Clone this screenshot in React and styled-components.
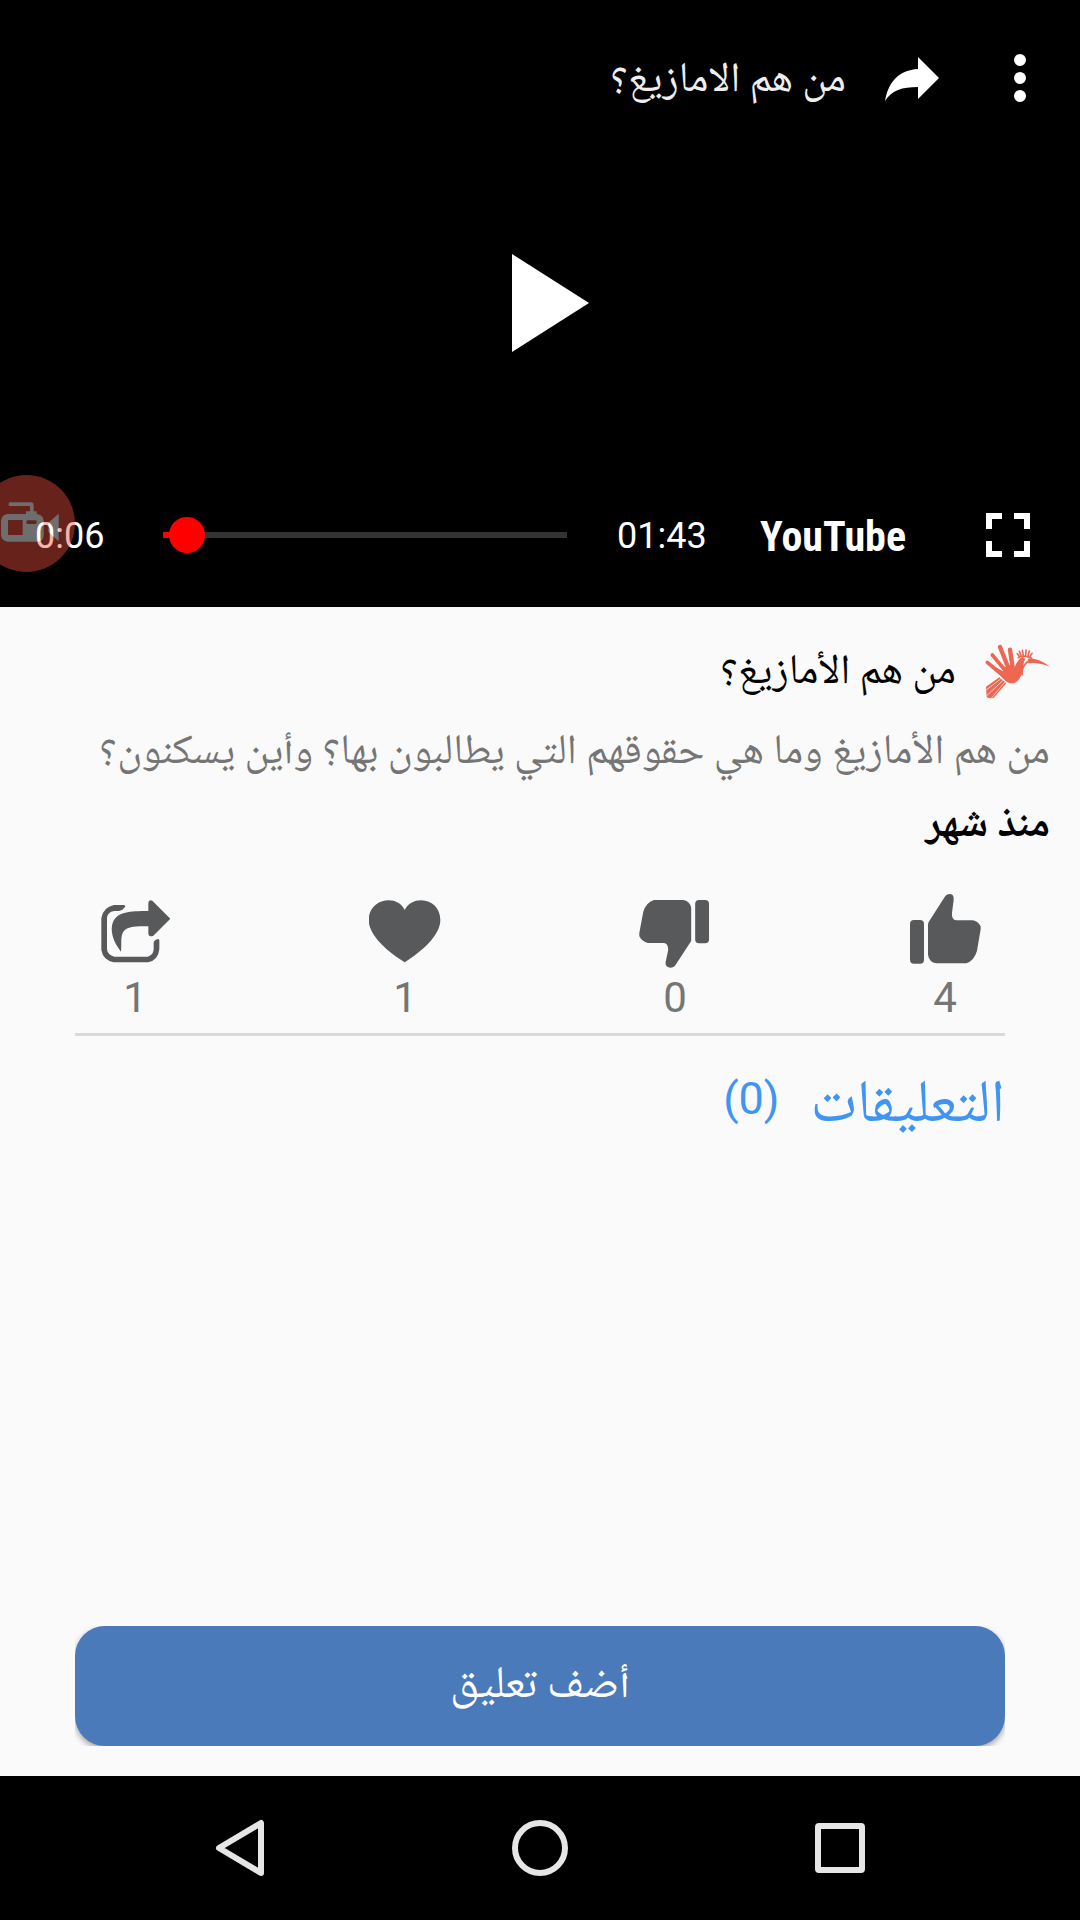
import React, { useState } from "react";
import styled, { createGlobalStyle } from "styled-components";

const arabic = '"Noto Naskh Arabic UI", "Noto Naskh Arabic", Roboto, "Noto Sans", sans-serif';
const latin = 'Roboto, "Noto Sans", sans-serif';

const GlobalStyle = createGlobalStyle`
  *, *::before, *::after { box-sizing: border-box; }
  body { margin: 0; background: #fafafa; }
  h1, h2, p, time { margin: 0; }
  svg { display: block; flex: none; }
`;

const Screen = styled.div`
  display: flex;
  flex-direction: column;
  min-height: 100vh;
  font-family: ${arabic};
  font-size: 42px;
  color: #000;
`;

const PlainButton = styled.button`
  display: flex;
  align-items: center;
  justify-content: center;
  margin: 0;
  padding: 0;
  border: 0;
  background: none;
  color: inherit;
  font: inherit;
  cursor: pointer;
`;

/* Video player */
const Player = styled.section`
  position: relative;
  display: flex;
  flex-direction: column;
  height: 607px;
  overflow: hidden;
  background: #000;
  color: #fff;
`;

const PlayerHeader = styled.header`
  display: flex;
  align-items: center;
  height: 142px;
  padding: 14px 48px 0;
`;

const PlayerTitle = styled.h2`
  margin-right: 39px;
  padding-top: 5px;
  color: #eee;
  font-size: 42px;
  font-weight: 400;
  line-height: 72px;
`;

const ShareVideo = styled(PlainButton)`
  margin-right: 69px;
`;

const PlayerCenter = styled.div`
  display: flex;
  flex: 1;
  align-items: center;
  justify-content: center;
`;

const Controls = styled.div`
  display: flex;
  align-items: center;
  height: 144px;
  padding: 0 50px 0 35px;
  direction: ltr;
`;

const TimeLabel = styled.span`
  width: ${(p) => p.$width}px;
  padding-top: 2px;
  font-family: ${latin};
  font-size: 36px;
  line-height: 42px;
`;

const Seek = styled.input`
  flex: 1;
  min-width: 0;
  height: 36px;
  margin: 0 32px 0 40px;
  appearance: none;
  background:
    linear-gradient(#f00, #f00) 18px center / calc((100% - 36px) * ${(p) => p.$ratio}) 6px no-repeat,
    linear-gradient(#333, #333) center / calc(100% - 36px) 6px no-repeat;

  &::-webkit-slider-thumb {
    appearance: none;
    width: 36px;
    height: 36px;
    border: 0;
    border-radius: 50%;
    background: #f00;
  }
`;

const Brand = styled.a`
  margin: 0 80px 0 54px;
  padding-top: 3px;
  color: #fff;
  font-family: "Roboto Condensed", "Liberation Sans Narrow", Roboto, sans-serif;
  font-size: 42px;
  font-weight: 700;
  line-height: 48px;
  text-decoration: none;
`;

const RecorderBubble = styled.div`
  position: absolute;
  top: 475px;
  left: -22px;
  width: 97px;
  height: 97px;
  overflow: hidden;
  border-radius: 50%;
  background: #ee5240;
  opacity: 0.43;
  pointer-events: none;
`;

/* Video details */
const Details = styled.section`
  display: flex;
  flex-direction: column;
  padding: 27px 30px 0;
`;

const TitleRow = styled.div`
  display: flex;
  align-items: center;
  gap: 28px;
`;

const Title = styled.h1`
  padding-top: 3px;
  font-size: 42px;
  font-weight: 400;
  line-height: 72px;
`;

const Description = styled.p`
  margin-top: 8px;
  color: #757575;
  line-height: 72px;
`;

const Published = styled.time`
  font-weight: 700;
  line-height: 74px;
`;

const Actions = styled.div`
  display: grid;
  grid-template-columns: repeat(4, 1fr);
  padding-top: 29px;
`;

const Action = styled(PlainButton)`
  flex-direction: column;
  color: #58595b;
`;

const Count = styled.span`
  color: #757575;
  font-family: ${latin};
  font-size: 42px;
  line-height: 60px;
`;

const Comments = styled.section`
  flex: 1;
  margin: 5px 75px 0;
  border-top: 3px solid #d9d9d9;
`;

const CommentsTitle = styled.h2`
  display: flex;
  align-items: flex-start;
  gap: 31px;
  padding-top: 28px;
  color: #4094f2;
  font-size: 60px;
  font-weight: 400;
  line-height: 84px;
`;

const CommentsCount = styled.span`
  font-family: ${latin};
  font-size: 45px;
  line-height: 70px;
`;

const Footer = styled.footer`
  display: flex;
  margin: 0 75px 30px;
  overflow: hidden;
`;

const AddComment = styled(PlainButton)`
  flex: 1;
  height: 120px;
  border-radius: 30px;
  background: #4a7aba;
  box-shadow: 0 3px 6px rgba(0, 0, 0, 0.35);
  color: #fff;
  font-size: 45px;
  line-height: 72px;
`;

/* System navigation */
const NavBar = styled.nav`
  display: grid;
  grid-template-columns: repeat(3, 1fr);
  height: 144px;
  padding: 0 90px;
  background: #000;
  color: #e6e6e6;
  direction: ltr;
`;

const ThumbUp = () => (
  <svg width="72" height="76" viewBox="0 0 216 228" fill="currentColor" aria-hidden="true">
    <rect x="3" y="84" width="42" height="131" rx="12" />
    <path d="M59 90 107 15C112 5 124 3 131 9Q135 14 134 24L129 62Q127 84 142 85H190Q206 86 215 103V112L204 176Q196 205 172 214H82Q60 210 57 188V96Z" />
  </svg>
);

const ThumbDown = () => (
  <svg width="72" height="76" viewBox="0 0 216 230" fill="currentColor" aria-hidden="true">
    <rect x="169" y="24" width="42" height="131" rx="12" />
    <path d="M157 148 109 222C105 229 90 232 83 225Q78 220 80 210L87 178Q89 156 74 154H26Q8 150 0 134V124L12 60Q20 32 44 24H134Q154 28 157 48Z" />
  </svg>
);

const Heart = () => (
  <svg width="72" height="76" viewBox="0 0 216 228" fill="currentColor" aria-hidden="true">
    <path d="M107 211C55 179-1 130-1 84C-1 50 25 25 59 25C80 25 98 35 107 54C117 35 135 25 156 25C190 25 214 50 214 84C214 130 158 179 107 211Z" />
  </svg>
);

const ShareOut = () => (
  <svg width="72" height="76" viewBox="0 0 216 228" fill="currentColor" aria-hidden="true">
    <path d="M45 39H74Q81 40 78 45Q72 54 60 57H46Q24 60 24 80V172Q26 190 46 194H146Q163 190 164 172V150Q169 141 178 141Q181 142 181 146V172Q178 204 148 211H44Q12 204 7 174V78Q12 46 45 39Z" />
    <path d="M66 179C42 150 31 113 43 88C57 60 90 57 148 57V34Q149 22 160 26L214 80 163 131Q150 137 148 126V103C110 102 84 104 74 118C63 134 69 155 66 179Z" />
  </svg>
);

const Hoopoe = () => (
  <svg width="66" height="55" viewBox="13 12 198 165" fill="none" stroke="#ed6753" strokeLinecap="round" aria-hidden="true">
    <path strokeWidth="11" d="M23 67 76 112M38 45 84 100" />
    <path strokeWidth="13" d="M61 21 91 96M91 29 101 96" />
    <path fill="#ed6753" stroke="none" d="M46 80 70 94 66 78 80 82 94 72 104 84C108 74 114 60 124 53Q133 48 136 58C131 68 131 82 127 98C122 118 110 130 96 130C78 130 64 110 46 80Z" />
    <path fill="#ed6753" stroke="none" d="M59 112 80 130 42 174Q30 176 21 172L19 140Z" />
    <path stroke="#fafafa" strokeWidth="2" strokeLinecap="butt" d="M64 116 18 151M70 121 20 168M76 126 33 177" />
    <path strokeWidth="5" d="M127 104Q125 74 151 61M116 53Q131 43 156 55" />
    <path strokeWidth="5" d="M118 48 113 41M124 46 119 34M131 46 128 31M138 46 139 30M145 47 149 33M151 50 157 40" />
    <path fill="#ed6753" stroke="none" d="M144 56Q174 52 211 80Q174 66 146 70Z" />
  </svg>
);

const Camcorder = () => (
  <svg width="97" height="97" viewBox="-66 15 291 291" fill="#fff" aria-hidden="true">
    <path
      fillRule="evenodd"
      d="M23 132H78V124H90V108H29Q22 103 29 97H92Q101 97 101 107V124H110V132Q131 134 131 154V194Q131 215 110 215H23Q3 213 3 193V153Q5 134 23 132ZM24 150V195H68V150ZM82 151Q75 156 82 162H107Q114 156 107 151Z"
    />
    <path d="M176 131V214L145 186V158Z" />
  </svg>
);

const actions = [
  { label: "إعجاب", count: 4, Icon: ThumbUp },
  { label: "عدم إعجاب", count: 0, Icon: ThumbDown },
  { label: "المفضلة", count: 1, Icon: Heart },
  { label: "مشاركة", count: 1, Icon: ShareOut },
];

const duration = 103;

export default function App() {
  const [position, setPosition] = useState(6);
  const clock = `${Math.floor(position / 60)}:${String(position % 60).padStart(2, "0")}`;

  return (
    <Screen dir="rtl" lang="ar">
      <GlobalStyle />
      <Player>
        <PlayerHeader>
          <PlainButton aria-label="المزيد">
            <svg width="24" height="48" viewBox="0 0 24 48" fill="#fff">
              <circle cx="12" cy="6" r="6" />
              <circle cx="12" cy="24" r="6" />
              <circle cx="12" cy="42" r="6" />
            </svg>
          </PlainButton>
          <ShareVideo aria-label="مشاركة الفيديو">
            <svg width="54" height="45" viewBox="0 0 54 45" fill="#fff">
              <path d="M33 1 54 22 33 43V31C17 31 7 34 0 45C3 26 14 14 33 13Z" />
            </svg>
          </ShareVideo>
          <PlayerTitle>من هم الامازيغ؟</PlayerTitle>
        </PlayerHeader>
        <PlayerCenter>
          <PlainButton aria-label="تشغيل">
            <svg width="100" height="98" viewBox="0 0 100 98" fill="#fff">
              <path d="M22 0 99 49 22 98Z" />
            </svg>
          </PlainButton>
        </PlayerCenter>
        <Controls>
          <TimeLabel $width={70}>{clock}</TimeLabel>
          <Seek
            type="range"
            min="0"
            max={duration}
            value={position}
            $ratio={position / duration}
            aria-label="موضع التشغيل"
            onChange={(e) => setPosition(Number(e.target.value))}
          />
          <TimeLabel $width={89}>01:43</TimeLabel>
          <Brand href="#youtube">YouTube</Brand>
          <PlainButton aria-label="ملء الشاشة">
            <svg width="44" height="44" viewBox="0 0 44 44" fill="none" stroke="#fff" strokeWidth="6">
              <path d="M3 16V3H16M28 3H41V16M41 28V41H28M16 41H3V28" />
            </svg>
          </PlainButton>
        </Controls>
        <RecorderBubble>
          <Camcorder />
        </RecorderBubble>
      </Player>

      <Details>
        <TitleRow>
          <Hoopoe />
          <Title>من هم الأمازيغ؟</Title>
        </TitleRow>
        <Description>من هم الأمازيغ وما هي حقوقهم التي يطالبون بها؟ وأين يسكنون؟</Description>
        <Published>منذ شهر</Published>
      </Details>

      <Actions>
        {actions.map(({ label, count, Icon }) => (
          <Action key={label} aria-label={label}>
            <Icon />
            <Count>{count}</Count>
          </Action>
        ))}
      </Actions>

      <Comments>
        <CommentsTitle>
          التعليقات
          <CommentsCount dir="ltr">(0)</CommentsCount>
        </CommentsTitle>
      </Comments>

      <Footer>
        <AddComment>أضف تعليق</AddComment>
      </Footer>

      <NavBar>
        <PlainButton aria-label="رجوع">
          <svg width="50" height="58" viewBox="0 0 50 58" fill="none" stroke="currentColor" strokeWidth="6" strokeLinejoin="round">
            <path d="M46 4V54L4 29Z" />
          </svg>
        </PlainButton>
        <PlainButton aria-label="الرئيسية">
          <svg width="56" height="56" viewBox="0 0 56 56" fill="none" stroke="currentColor" strokeWidth="6">
            <circle cx="28" cy="28" r="25" />
          </svg>
        </PlainButton>
        <PlainButton aria-label="التطبيقات الأخيرة">
          <svg width="50" height="50" viewBox="0 0 50 50" fill="none" stroke="currentColor" strokeWidth="6">
            <rect x="3" y="3" width="44" height="44" rx="1" />
          </svg>
        </PlainButton>
      </NavBar>
    </Screen>
  );
}
